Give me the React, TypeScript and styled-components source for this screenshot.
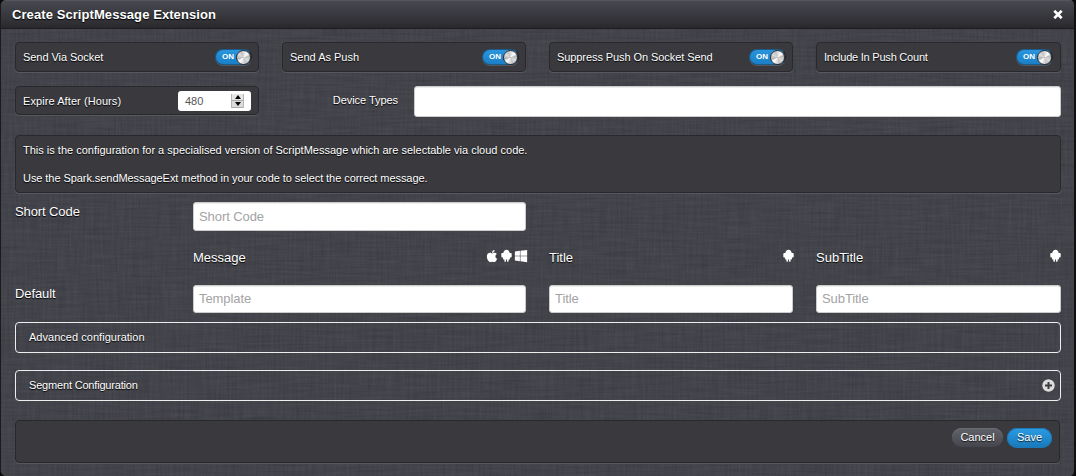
import React from "react";
import styled, { createGlobalStyle, css } from "styled-components";
import { FaApple, FaWindows } from "react-icons/fa";

const GlobalStyle = createGlobalStyle`
  * { box-sizing: border-box; }
  html, body { margin: 0; background: #0b0b0d; }
  body, input, button { font-family: "Liberation Sans", Arial, sans-serif; }
`;

const Modal = styled.div`
  position: relative;
  isolation: isolate;
  width: 1076px;
  height: 476px;
  border: solid #1b1b1e;
  border-width: 0 2px 0 1px;
  border-right-color: #101012;
  border-radius: 6px;
  overflow: hidden;
  color: #fff;
  background: #43434b;
`;

const Texture = styled.svg`
  position: absolute;
  inset: 0;
  z-index: -1;
  width: 100%;
  height: 100%;
`;

const Header = styled.header`
  height: 29px;
  padding: 0 11px;
  display: flex;
  align-items: center;
  justify-content: space-between;
  border-top: 1px solid #55555e;
  border-bottom: 1px solid #1d1d20;
  background: linear-gradient(#484851, #29292d);
`;

const Heading = styled.h1`
  margin: 0;
  font-size: 13px;
  line-height: 26px;
  letter-spacing: 0.08px;
  text-shadow: 0 1px 1px #000;
`;

const CloseButton = styled.button`
  display: flex;
  padding: 0;
  border: 0;
  background: none;
`;

const Body = styled.main`
  padding: 13px 13px 0 14px;
  display: flex;
  flex-direction: column;
`;

const Grid = styled.div<{ $height: number; $gap: number }>`
  display: grid;
  grid-template-columns: repeat(11, 66px) 67px;
  column-gap: 23px;
  align-items: start;
  height: ${(p) => p.$height}px;
  margin-bottom: ${(p) => p.$gap}px;
`;

const panel = css`
  border: 1px solid #29292d;
  border-radius: 4px;
  background: #39393e;
  box-shadow: 0 1px 0 #57575e;
`;

const OptionPanel = styled.div<{ $height: number }>`
  ${panel}
  grid-column: span 3;
  height: ${(p) => p.$height}px;
  padding: 0 6px 0 7px;
  display: flex;
  align-items: center;
  justify-content: space-between;
  &:last-child { padding-right: 7px; }
`;

const SmallText = styled.span<{ $tracking?: number }>`
  font-size: 11px;
  line-height: 14px;
  letter-spacing: ${(p) => p.$tracking ?? 0}px;
  text-shadow: 0 1px 1px #000;
`;

const Switch = styled.span`
  width: 37px;
  height: 16px;
  display: flex;
  align-items: center;
  justify-content: space-between;
  padding-left: 6px;
  border: 1px solid #1c5a88;
  border-right-color: #222;
  border-radius: 8px;
  background: linear-gradient(#2a95dd, #1b7fc6);
  box-shadow: 0 1px 0 #58585e;
  font-size: 8px;
  font-weight: bold;
  line-height: 14px;
`;

const Knob = styled.i`
  width: 15px;
  height: 15px;
  flex: none;
  border: 1px solid #2c2c2e;
  border-radius: 50%;
  background: conic-gradient(from 20deg, #e8e8e8, #fff 8%, #bbb 16%, #ddd 28%, #c4c4c4 38%, #eee 52%, #fff 58%, #b5b5b5 66%, #ddd 78%, #c4c4c4 88%, #e8e8e8);
`;

const NumberField = styled.div`
  width: 73px;
  height: 20px;
  margin-right: 1px;
  padding: 0 7px;
  display: flex;
  align-items: center;
  justify-content: space-between;
  border-radius: 3px;
  background: #fff;
  color: #555;
  font-size: 11px;
`;

const Stepper = styled.div`
  width: 13px;
  height: 14px;
  display: grid;
  grid-template-rows: 7px 7px;
  place-items: center;
  background: linear-gradient(#e6e6e6 0 6px, #aaa 6px 7px, #dcdcdc 7px 13px, #aaa 13px);
  border: solid #b5b5b5;
  border-width: 0 1px;
`;

const FieldLabel = styled.label<{ $top: number }>`
  grid-column: span 2;
  padding-top: ${(p) => p.$top}px;
  font-size: 13px;
  line-height: 16px;
  letter-spacing: -0.1px;
  text-shadow: 0 1px 1px #000;
`;

const DeviceField = styled.div`
  grid-column: span 9;
  display: flex;
  justify-content: space-between;
`;

const DeviceLabel = styled.label`
  width: 116px;
  padding-top: 7px;
  text-align: right;
  font-size: 11px;
  line-height: 14px;
  letter-spacing: -0.05px;
  text-shadow: 0 1px 1px #000;
`;

const TextInput = styled.input<{ $span?: number; $height: number; $width?: number }>`
  ${(p) => (p.$span ? `grid-column: span ${p.$span};` : "")}
  width: ${(p) => (p.$width ? `${p.$width}px` : "100%")};
  height: ${(p) => p.$height}px;
  margin: 0;
  padding: 0 5px 1px;
  border: 1px solid #ccc;
  border-radius: 3px;
  background: #fff;
  box-shadow: inset 0 1px 1px rgba(0, 0, 0, 0.075);
  font-size: 13px;
  letter-spacing: -0.08px;
  &::placeholder { color: #a3a3a3; opacity: 1; }
`;

const InfoPanel = styled.section`
  ${panel}
  height: 58px;
  padding: 7px;
  margin-bottom: 9px;
  display: flex;
  flex-direction: column;
  gap: 14px;
`;

const ColumnHead = styled.div<{ $span: number; $start?: number }>`
  grid-column: ${(p) => (p.$start ? `${p.$start} / ` : "")} span ${(p) => p.$span};
  display: flex;
  justify-content: space-between;
  font-size: 13px;
  line-height: 16px;
  text-shadow: 0 1px 1px #000;
`;

const Platforms = styled.span<{ $overhang?: number }>`
  display: flex;
  align-items: center;
  gap: 2px;
  height: 13px;
  margin-top: -1px;
  margin-right: ${(p) => -(p.$overhang ?? 0)}px;
`;

const Fold = styled.section`
  height: 31px;
  margin-bottom: 17px;
  padding: 0 5px 1px 13px;
  display: flex;
  align-items: center;
  justify-content: space-between;
  border: 1px solid #eee;
  border-radius: 4px;
`;

const Footer = styled.footer`
  ${panel}
  height: 43px;
  margin: 2px 1px 0 0;
  padding: 7px 7px 0;
  display: flex;
  justify-content: flex-end;
  align-items: flex-start;
  gap: 4px;
`;

const PillButton = styled.button<{ $primary?: boolean }>`
  width: ${(p) => (p.$primary ? 45 : 51)}px;
  height: ${(p) => (p.$primary ? 20 : 19)}px;
  padding: 0 0 ${(p) => (p.$primary ? 2 : 1)}px;
  border: 0;
  border-radius: 10px;
  color: #fff;
  font-size: 11px;
  line-height: 18px;
  text-shadow: 0 1px 1px rgba(0, 0, 0, 0.8);
  background: ${(p) => (p.$primary ? "linear-gradient(#2c9ce3, #1878ba)" : "linear-gradient(#62626b, #45454c)")};
  box-shadow: ${(p) => (p.$primary ? "inset 0 0 0 1px #1b79b8" : "inset 0 1px 0 #6b6b73")};
`;

const AndroidIcon = () => (
  <svg width="11" height="13" viewBox="0 0 11 13" fill="#fff">
    <path d="M2.3 4C2.5 2.2 3.7.8 5.5.8s3 1.4 3.2 3.2h.9c.7 0 1.1.5 1.1 1.1v2.2c0 .8-.4 1.2-1.1 1.2H9v.9c0 .6-.4 1-1 1h-.4v1.5c0 .5-.3.9-.8.9s-.8-.4-.8-.9v-1.5H5v1.5c0 .5-.3.9-.8.9s-.8-.4-.8-.9v-1.5H3c-.6 0-1-.4-1-1v-.9h-.6C.7 8.5.3 8.1.3 7.3V5.100c0-.6.4-1.1 1.1-1.1z" />
  </svg>
);

const Linen = () => (
  <Texture aria-hidden="true">
    <filter id="warp" x="0" y="0" width="100%" height="100%" colorInterpolationFilters="sRGB">
      <feTurbulence type="fractalNoise" baseFrequency="0.45 0.025" numOctaves="3" seed="4" />
      <feColorMatrix values="0.1 0 0 0 0.215  0.1 0 0 0 0.215  0.1 0 0 0 0.244  0 0 0 0 1" />
    </filter>
    <filter id="weft" x="0" y="0" width="100%" height="100%" colorInterpolationFilters="sRGB">
      <feTurbulence type="fractalNoise" baseFrequency="0.025 0.45" numOctaves="3" seed="9" />
      <feColorMatrix values="0.1 0 0 0 0.215  0.1 0 0 0 0.215  0.1 0 0 0 0.244  0 0 0 0 1" />
    </filter>
    <rect width="100%" height="100%" filter="url(#warp)" />
    <rect width="100%" height="100%" filter="url(#weft)" opacity="0.5" />
  </Texture>
);

const Toggle = () => (
  <Switch>
    ON
    <Knob />
  </Switch>
);

const options = [
  { label: "Send Via Socket", tracking: -0.06 },
  { label: "Send As Push", tracking: 0 },
  { label: "Suppress Push On Socket Send", tracking: -0.08 },
  { label: "Include In Push Count", tracking: -0.22 },
];

export default function App() {
  return (
    <>
      <GlobalStyle />
      <Modal>
        <Linen />
        <Header>
          <Heading>Create ScriptMessage Extension</Heading>
          <CloseButton aria-label="Close">
            <svg width="10" height="9" viewBox="0 0 10 9" stroke="#fff" strokeWidth="2.7">
              <path d="M1.3 0.8 8.7 8.2M8.7 0.8 1.3 8.2" />
            </svg>
          </CloseButton>
        </Header>
        <Body>
          <Grid $height={30} $gap={14}>
            {options.map(({ label, tracking }) => (
              <OptionPanel key={label} $height={30}>
                <SmallText $tracking={tracking}>{label}</SmallText>
                <Toggle />
              </OptionPanel>
            ))}
          </Grid>
          <Grid $height={31} $gap={18}>
            <OptionPanel $height={29}>
              <SmallText $tracking={0.08}>Expire After (Hours)</SmallText>
              <NumberField>
                480
                <Stepper>
                  <svg width="8" height="4" viewBox="0 0 8 4"><path d="M4 0 7 4H1z" /></svg>
                  <svg width="8" height="4" viewBox="0 0 8 4"><path d="M1 0h6L4 4z" /></svg>
                </Stepper>
              </NumberField>
            </OptionPanel>
            <DeviceField>
              <DeviceLabel>Device Types</DeviceLabel>
              <TextInput $height={31} $width={647} aria-label="Device Types" />
            </DeviceField>
          </Grid>
          <InfoPanel>
            <SmallText>This is the configuration for a specialised version of ScriptMessage which are selectable via cloud code.</SmallText>
            <SmallText $tracking={-0.065}>Use the Spark.sendMessageExt method in your code to select the correct message.</SmallText>
          </InfoPanel>
          <Grid $height={29} $gap={19}>
            <FieldLabel $top={2}>Short Code</FieldLabel>
            <TextInput $span={4} $height={29} placeholder="Short Code" />
          </Grid>
          <Grid $height={16} $gap={19}>
            <ColumnHead $start={3} $span={4}>
              Message
              <Platforms $overhang={2}>
                <FaApple size={14} />
                <AndroidIcon />
                <FaWindows size={14} />
              </Platforms>
            </ColumnHead>
            <ColumnHead $span={3}>
              Title
              <Platforms $overhang={1}><AndroidIcon /></Platforms>
            </ColumnHead>
            <ColumnHead $span={3}>
              SubTitle
              <Platforms><AndroidIcon /></Platforms>
            </ColumnHead>
          </Grid>
          <Grid $height={28} $gap={9}>
            <FieldLabel $top={1}>Default</FieldLabel>
            <TextInput $span={4} $height={28} placeholder="Template" />
            <TextInput $span={3} $height={28} placeholder="Title" />
            <TextInput $span={3} $height={28} placeholder="SubTitle" />
          </Grid>
          <Fold>
            <SmallText $tracking={0.03}>Advanced configuration</SmallText>
          </Fold>
          <Fold>
            <SmallText $tracking={-0.18}>Segment Configuration</SmallText>
            <svg width="13" height="13" viewBox="0 0 13 13">
              <circle cx="6.5" cy="6.5" r="6.2" fill="#ddd" />
              <path d="M6.5 3v7M3 6.5h7" stroke="#3b3b42" strokeWidth="2" />
            </svg>
          </Fold>
          <Footer>
            <PillButton>Cancel</PillButton>
            <PillButton $primary>Save</PillButton>
          </Footer>
        </Body>
      </Modal>
    </>
  );
}
